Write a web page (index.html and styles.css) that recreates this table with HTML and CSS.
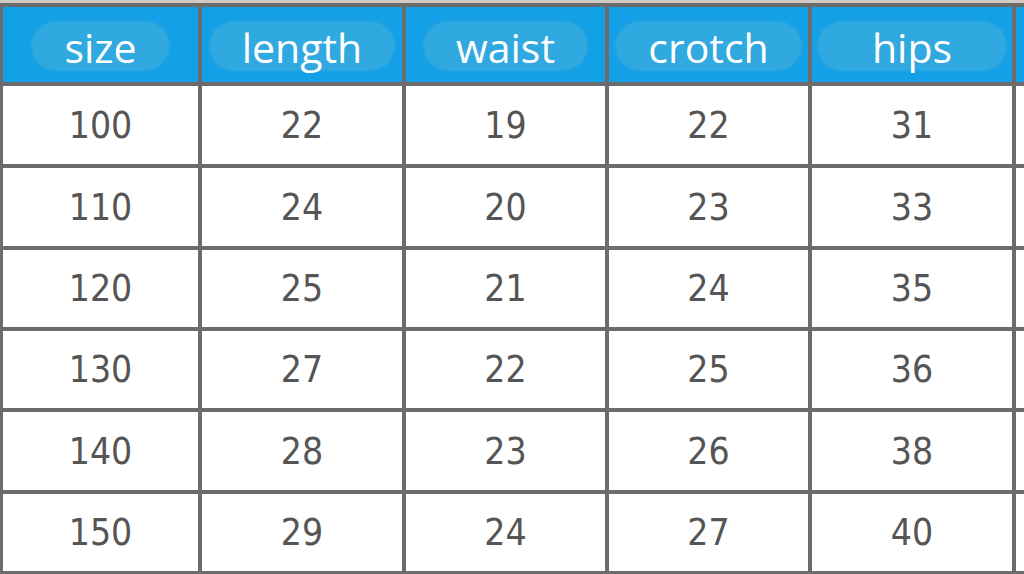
FILE: index.html
```html
<!DOCTYPE html>
<html>
<head>
<meta charset="utf-8">
<link rel="stylesheet" href="styles.css">
</head>
<body>
<div class="band"></div>
<div class="chart">
  <div class="hd"><span class="pill">size</span></div>
  <div class="hd"><span class="pill">length</span></div>
  <div class="hd"><span class="pill">waist</span></div>
  <div class="hd"><span class="pill">crotch</span></div>
  <div class="hd"><span class="pill pill-wide">hips</span></div>
  <div class="hd"></div>

  <div class="c">100</div><div class="c">22</div><div class="c">19</div><div class="c">22</div><div class="c">31</div><div class="c"></div>
  <div class="c">110</div><div class="c">24</div><div class="c">20</div><div class="c">23</div><div class="c">33</div><div class="c"></div>
  <div class="c">120</div><div class="c">25</div><div class="c">21</div><div class="c">24</div><div class="c">35</div><div class="c"></div>
  <div class="c">130</div><div class="c">27</div><div class="c">22</div><div class="c">25</div><div class="c">36</div><div class="c"></div>
  <div class="c">140</div><div class="c">28</div><div class="c">23</div><div class="c">26</div><div class="c">38</div><div class="c"></div>
  <div class="c">150</div><div class="c">29</div><div class="c">24</div><div class="c">27</div><div class="c">40</div><div class="c"></div>
</div>
</body>
</html>
```
FILE: styles.css
```css
html, body {
  margin: 0;
  padding: 0;
  width: 1024px;
  height: 574px;
  overflow: hidden;
  background: #ffffff;
}

.band {
  height: 3px;
  background: #cfccc3;
}

.chart {
  display: grid;
  grid-template-columns: 195px 200px 199px 199px 200px 20px;
  grid-template-rows: 75px 78px 78px 77px 77px 78px 77px;
  gap: 4px;
  padding: 4px 0 4px 3px;
  background: #6c6c6c;
  width: 1040px;
}

.hd {
  background: #14a0e6;
  display: flex;
  align-items: center;
  justify-content: center;
}

.pill {
  display: inline-block;
  height: 48px;
  box-sizing: border-box;
  padding: 1px 32px 0;
  line-height: 48px;
  border-radius: 24px;
  background: #2fa9df;
  box-shadow: 0 0 3px 1px #2aa7e0;
  color: #ffffff;
  font-family: "Open Sans", "Noto Sans", sans-serif;
  font-size: 41px;
  font-weight: 500;
  margin-top: 2px;
}

.pill-wide {
  padding: 1px 54px 0;
}

.c {
  background: #ffffff;
  display: flex;
  align-items: center;
  justify-content: center;
  color: #555555;
  font-family: "DejaVu Sans Condensed", "DejaVu Sans", sans-serif;
  font-stretch: condensed;
  font-size: 37px;
}
```
